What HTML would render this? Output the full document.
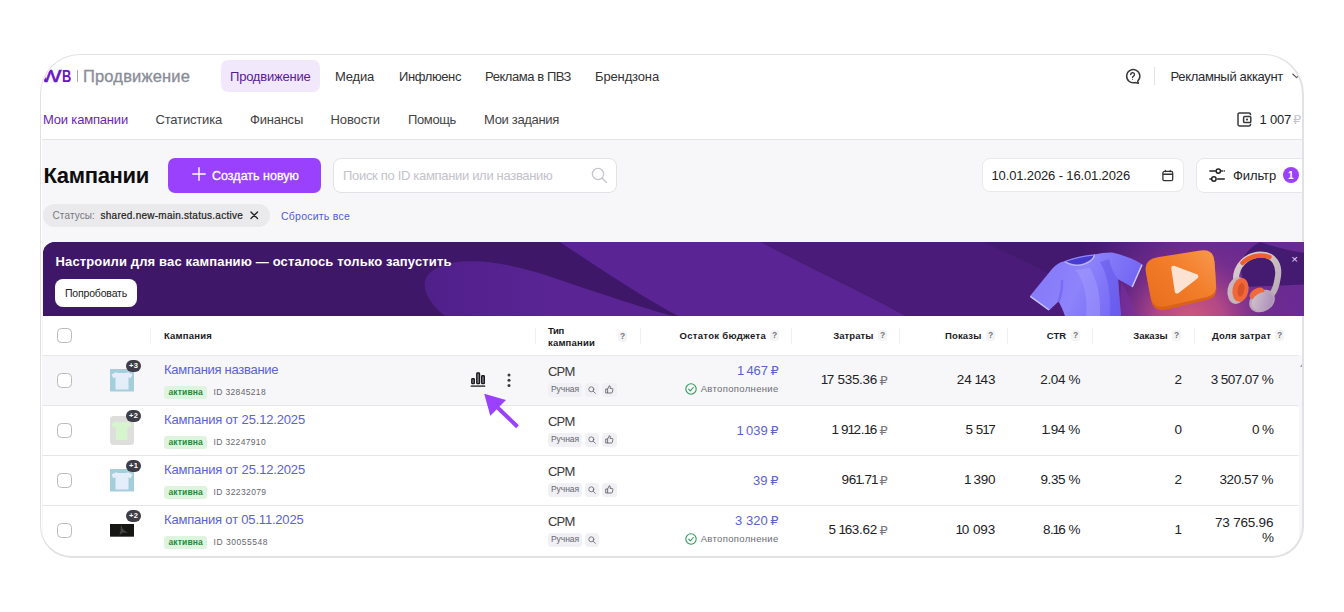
<!DOCTYPE html>
<html lang="ru"><head><meta charset="utf-8"><title>WB Продвижение — Кампании</title>
<style>
*{box-sizing:border-box;margin:0;padding:0}
html,body{width:1344px;height:612px;background:#fff;overflow:hidden}
body{font-family:"Liberation Sans","DejaVu Sans",sans-serif;position:relative;color:#222}
#clip{position:absolute;left:0;top:0;width:1344px;height:612px;clip-path:inset(55.500px 41.500px 56.500px 41.500px round 38.500px 38.500px 30px 30px);background:#fff}
#frame{position:absolute;left:40.100px;top:54.200px;width:1263.900px;height:503.400px;border:solid #e2e2e5;border-width:1.800px 2px 2.600px 1.800px;border-radius:40px 40px 32px 32px;pointer-events:none}
.a{position:absolute}
.t{position:absolute;white-space:nowrap}
svg{position:absolute;overflow:visible}
.cb{position:absolute;width:15px;height:15px;border:1.5px solid #b9b9c0;border-radius:4.5px;background:#fff}
.q{position:absolute;width:9px;height:11px;border-radius:3px;background:#f4f4f6;color:#74747c;font-size:8.500px;font-weight:700;line-height:11px;text-align:center}
.sep{position:absolute;top:328px;width:1px;height:16px;background:#f0f0f3}
.rowline{position:absolute;left:42px;width:1256px;height:1px;background:#e6e6ea}
.st{position:absolute;left:164px;width:43px;height:12.500px;border-radius:3px;background:#dff4df}
.chip{position:absolute;height:14px;border-radius:3.500px;background:#f1f1f5}
.plus{position:absolute;width:15.200px;height:12.200px;border-radius:6.100px;background:#3e3e49;color:#fff;font-size:7.500px;font-weight:700;line-height:12.200px;text-align:center;letter-spacing:.300px}
.o{font-style:normal;margin:0 -1.200px 0 -.600px}
.lw{display:inline-block;font-weight:400;transform:scaleX(1.380);transform-origin:0 50%;-webkit-text-stroke:.450px #6b14c9}
.lb{display:inline-block;font-weight:700;transform:scaleX(.780);transform-origin:0 50%;margin-left:6px}

</style></head>
<body>
<div id="clip">
<!-- header -->
<div class="a" style="left:42px;top:55px;width:1262px;height:84px;background:#fff"></div>
<div class="a" style="left:42px;top:139px;width:1262px;height:1px;background:#e4e4e8"></div>
<div class="a" style="left:42px;top:140px;width:1262px;height:416px;background:#f7f7f9"></div>
<div class="a" style="left:76.800px;top:70px;width:1px;height:12px;background:#a9a9b0"></div>
<div class="a" style="left:221px;top:60px;width:99px;height:32px;border-radius:7px;background:#f1e8fc"></div>
<div class="a" style="left:1154px;top:67px;width:1px;height:18px;background:#e2e2e6"></div>
<!-- help icon -->
<svg style="left:1124px;top:68px" width="17" height="17" viewBox="0 0 17 17" fill="none" stroke="#3a3a3e" stroke-width="1.500" stroke-linecap="round" stroke-linejoin="round"><path d="M13.6 13.2A6.6 6.6 0 1 0 11 14.6l3.4.6z"/><path d="M6.7 6.6a1.9 1.9 0 1 1 2.7 1.7c-.6.3-.9.7-.9 1.3" stroke-width="1.400"/><circle cx="8.5" cy="11.6" r=".5" fill="#444" stroke="none"/></svg>
<!-- chevron -->
<svg style="left:1292px;top:73px" width="9" height="6" viewBox="0 0 9 6" fill="none" stroke="#555" stroke-width="1.1" stroke-linecap="round" stroke-linejoin="round"><path d="M.8 1l3.7 3.6L8.2 1"/></svg>
<!-- wallet -->
<svg style="left:1237px;top:112px" width="15" height="15" viewBox="0 0 15 15" fill="none" stroke="#3a3a3e" stroke-width="1.500" stroke-linejoin="round"><path d="M13.5 3.2V2.4c0-.8-.6-1.4-1.4-1.4H2.4C1.600 1 1 1.600 1 2.400v10.200c0 .8.600 1.400 1.400 1.400h9.700c.8 0 1.400-.6 1.400-1.400v-.8"/><rect x="6.600" y="4.400" width="7.200" height="6.200" rx="1.200"/><rect x="9" y="6.600" width="2" height="1.800" fill="#444" stroke="none"/></svg>
<!-- create button -->
<div class="a" style="left:168px;top:158px;width:153px;height:35px;border-radius:7px;background:#9a41fe"></div>
<svg style="left:191.500px;top:167.300px" width="14" height="14" viewBox="0 0 14 14" stroke="#fff" stroke-width="1.400" stroke-linecap="round"><path d="M7 .800v12.400M.800 7h12.400"/></svg>
<!-- search -->
<div class="a" style="left:333px;top:158px;width:284px;height:35px;border-radius:8px;background:#fff;border:1px solid #e2e2e6"></div>
<svg style="left:591px;top:167px" width="17" height="17" viewBox="0 0 17 17" fill="none" stroke="#c4c4ca" stroke-width="1.3" stroke-linecap="round"><circle cx="7" cy="7" r="5.600"/><path d="M11.200 11.200l4.300 4.300"/></svg>
<!-- date -->
<div class="a" style="left:982px;top:158px;width:202px;height:34px;border-radius:8px;background:#fff;border:1px solid #e9e9ec"></div>
<svg style="left:1162px;top:169.500px" width="11.600" height="11.600" viewBox="0 0 11.600 11.600" fill="none" stroke="#333" stroke-width="1.300"><rect x=".900" y="1.400" width="9.800" height="9.300" rx="1.500"/><path d="M.900 4.300h9.800" stroke-width="1.500"/><path d="M3.400.300v1.400M8.200.300v1.400" stroke-linecap="round" stroke-width="1.100"/></svg>
<!-- filter -->
<div class="a" style="left:1196px;top:158px;width:130px;height:35px;border-radius:8px;background:#fff;border:1px solid #e6e6ea"></div>
<svg style="left:1209px;top:166.500px" width="16" height="16" viewBox="0 0 16 16" fill="none" stroke="#222" stroke-width="1.500" stroke-linecap="round"><path d="M.900 4.100h5.300M12.700 4.100h.700M15.200 4.100h.100M.900 12h.700M8.600 12h6.700"/><circle cx="9.300" cy="4.100" r="2.200"/><circle cx="4.900" cy="12" r="2.200"/></svg>
<div class="a" style="left:1282.500px;top:167.200px;width:16.200px;height:16.200px;border-radius:50%;background:#9a41fe"></div>
<!-- filter chip -->
<div class="a" style="left:43px;top:204px;width:227px;height:23px;border-radius:12px;background:#eaeaed"></div>
<svg style="left:250.300px;top:211.300px" width="8.500" height="8.500" viewBox="0 0 9 9" stroke="#222" stroke-width="1.350" stroke-linecap="round"><path d="M1 1l7 7M8 1l-7 7"/></svg>
<!-- table header -->
<div class="a" style="left:43px;top:316px;width:1262px;height:39px;background:#fff"></div>
<div class="rowline" style="top:355px;background:#e9e9ed"></div>
<div class="cb" style="left:57px;top:328px"></div>
<div class="sep" style="left:150px"></div>
<div class="sep" style="left:535px"></div>
<div class="sep" style="left:640px"></div>
<div class="sep" style="left:791px"></div>
<div class="sep" style="left:899px"></div>
<div class="sep" style="left:1007px"></div>
<div class="sep" style="left:1092px"></div>
<div class="sep" style="left:1194px"></div>
<div class="q" style="left:618px;top:331px">?</div>
<div class="q" style="left:770px;top:330px">?</div>
<div class="q" style="left:878px;top:330px">?</div>
<div class="q" style="left:986px;top:330px">?</div>
<div class="q" style="left:1071px;top:330px">?</div>
<div class="q" style="left:1172px;top:330px">?</div>
<div class="q" style="left:1275px;top:330px">?</div>
<!-- rows -->
<div class="a" style="left:43px;top:356px;width:1259px;height:49px;background:#f7f7f9"></div>
<div class="a" style="left:43px;top:406px;width:1256px;height:49px;background:#fff"></div>
<div class="a" style="left:43px;top:456px;width:1256px;height:49px;background:#fff"></div>
<div class="a" style="left:43px;top:506px;width:1256px;height:50px;background:#fff"></div>
<div class="rowline" style="top:405px"></div>
<div class="rowline" style="top:455px"></div>
<div class="rowline" style="top:505px"></div>
<!-- scrollbar -->
<svg style="left:1299.500px;top:361px" width="4" height="6" viewBox="0 0 4 6"><path d="M0 6L4 0v6z" fill="#a0a0a6"/></svg>
<div class="cb" style="left:57px;top:372.5px"></div>
<svg style="left:110px;top:369.3px" width="24" height="22.5" viewBox="0 0 24 22.5"><rect width="24" height="22.5" fill="#a6cddb"/><path d="M1.500 5.500l4.500-2.300c2.500 1.200 9.500 1.200 12 0l4.500 2.300-1.800 3.800-2.200-1v12.200H5.500V8.300l-2.200 1z" fill="#e3eefa"/></svg>
<div class="plus" style="left:126px;top:359.6px">+3</div>
<div class="st" style="top:386px"></div>
<div class="chip" style="left:548px;top:382.5px;width:34.300px"></div>
<div class="chip" style="left:585px;top:382.5px;width:14.300px"></div>
<svg style="left:588px;top:385.5px" width="8" height="8" viewBox="0 0 8 8" fill="none" stroke="#606066" stroke-width=".800" stroke-linecap="round"><circle cx="3.300" cy="3.300" r="2.500"/><path d="M5.200 5.200l2.200 2.200"/></svg>
<div class="chip" style="left:602px;top:382.5px;width:15px"></div>
<svg style="left:605px;top:385px" width="9" height="9" viewBox="0 0 9 9" fill="none" stroke="#55555c" stroke-width=".800" stroke-linejoin="round"><path d="M2.600 4v4M.700 4h1.900l1.700-3.300c.7 0 1.100.5 1 1.200l-.3 1.500h2c.6 0 1 .5.900 1.100l-.5 2.600c-.1.500-.5.900-1 .9H.700z"/></svg>
<svg style="left:684.500px;top:383px" width="12" height="12" viewBox="0 0 12 12" fill="none" stroke="#2e9c57" stroke-width="1.100" stroke-linecap="round" stroke-linejoin="round"><circle cx="6" cy="6" r="5.200"/><path d="M3.700 6.200l1.600 1.600 3-3.300"/></svg>
<div class="cb" style="left:57px;top:422.5px"></div>
<svg style="left:110px;top:416px" width="24" height="29" viewBox="0 0 24 29"><rect width="24" height="29" rx="3.500" fill="#dededd"/><path d="M1.500 8l4.500-2.500c2.500 1.200 8.500 1.200 11 0l4.500 2.500-1.500 4-2.500-1v13H6V11l-2.500 1z" fill="#d6f5cf"/></svg>
<div class="plus" style="left:126px;top:409.6px">+2</div>
<div class="st" style="top:436px"></div>
<div class="chip" style="left:548px;top:432.5px;width:34.300px"></div>
<div class="chip" style="left:585px;top:432.5px;width:14.300px"></div>
<svg style="left:588px;top:435.5px" width="8" height="8" viewBox="0 0 8 8" fill="none" stroke="#606066" stroke-width=".800" stroke-linecap="round"><circle cx="3.300" cy="3.300" r="2.500"/><path d="M5.200 5.200l2.200 2.200"/></svg>
<div class="chip" style="left:602px;top:432.5px;width:15px"></div>
<svg style="left:605px;top:435px" width="9" height="9" viewBox="0 0 9 9" fill="none" stroke="#55555c" stroke-width=".800" stroke-linejoin="round"><path d="M2.600 4v4M.700 4h1.900l1.700-3.300c.7 0 1.100.5 1 1.200l-.3 1.500h2c.6 0 1 .5.900 1.100l-.5 2.600c-.1.500-.5.900-1 .9H.700z"/></svg>
<div class="cb" style="left:57px;top:472.5px"></div>
<svg style="left:110px;top:469.3px" width="24" height="22.5" viewBox="0 0 24 22.5"><rect width="24" height="22.5" fill="#a6cddb"/><path d="M1.500 5.500l4.500-2.300c2.500 1.200 9.500 1.200 12 0l4.500 2.300-1.800 3.800-2.200-1v12.200H5.500V8.300l-2.200 1z" fill="#e3eefa"/></svg>
<div class="plus" style="left:126px;top:459.6px">+1</div>
<div class="st" style="top:486px"></div>
<div class="chip" style="left:548px;top:482.5px;width:34.300px"></div>
<div class="chip" style="left:585px;top:482.5px;width:14.300px"></div>
<svg style="left:588px;top:485.5px" width="8" height="8" viewBox="0 0 8 8" fill="none" stroke="#606066" stroke-width=".800" stroke-linecap="round"><circle cx="3.300" cy="3.300" r="2.500"/><path d="M5.200 5.200l2.200 2.200"/></svg>
<div class="chip" style="left:602px;top:482.5px;width:15px"></div>
<svg style="left:605px;top:485px" width="9" height="9" viewBox="0 0 9 9" fill="none" stroke="#55555c" stroke-width=".800" stroke-linejoin="round"><path d="M2.600 4v4M.700 4h1.900l1.700-3.300c.7 0 1.100.5 1 1.200l-.3 1.500h2c.6 0 1 .5.900 1.100l-.5 2.600c-.1.500-.5.900-1 .9H.700z"/></svg>
<div class="cb" style="left:57px;top:522.5px"></div>
<svg style="left:110px;top:524.2px" width="24" height="12.700" viewBox="0 0 24 12.700"><rect width="24" height="12.700" fill="#161614"/><path d="M11 .500l1.500 4 2.500 2.500 3 2-5-.500-3.500 2.500 1-4z" fill="#6a6a62" opacity=".55"/></svg>
<div class="plus" style="left:126px;top:509.6px">+2</div>
<div class="st" style="top:536px"></div>
<div class="chip" style="left:548px;top:532.5px;width:34.300px"></div>
<div class="chip" style="left:585px;top:532.5px;width:14.300px"></div>
<svg style="left:588px;top:535.5px" width="8" height="8" viewBox="0 0 8 8" fill="none" stroke="#606066" stroke-width=".800" stroke-linecap="round"><circle cx="3.300" cy="3.300" r="2.500"/><path d="M5.200 5.200l2.200 2.200"/></svg>
<svg style="left:684.500px;top:533px" width="12" height="12" viewBox="0 0 12 12" fill="none" stroke="#2e9c57" stroke-width="1.100" stroke-linecap="round" stroke-linejoin="round"><circle cx="6" cy="6" r="5.200"/><path d="M3.700 6.200l1.600 1.600 3-3.300"/></svg>
<svg style="left:470px;top:371px" width="16" height="16" viewBox="470 371 16 16" fill="#8a8a90" stroke="#1a1a1e" stroke-width="1.400"><rect x="471.800" y="378.800" width="2.500" height="4.800" rx=".700"/><rect x="476.800" y="373" width="2.700" height="10.600" rx=".700"/><rect x="481.700" y="375.700" width="2.600" height="7.900" rx=".700"/><path d="M470.700 386.100h14.500" stroke-width="1.300" fill="none"/></svg>
<svg style="left:507px;top:373.400px" width="4" height="15" viewBox="0 0 4 15" fill="#3a3a3e"><circle cx="2" cy="2" r="1.500"/><circle cx="2" cy="7.200" r="1.500"/><circle cx="2" cy="12.500" r="1.500"/></svg>
<svg style="left:0;top:0" width="1344" height="612" viewBox="0 0 1344 612"><path d="M497 407L517.500 426.700" stroke="#9a41fe" stroke-width="4" fill="none"/><path d="M484.200 393.800L506 400L490.300 415.800z" fill="#9a41fe"/></svg>
<span class="t" style="left:40px;top:65.80px;font-size:16.5px;line-height:21px;color:#6b14c9;"><b class="lw">W</b><b class="lb">B</b></span>
<span class="t" style="left:83px;top:66.00px;font-size:16.5px;line-height:21px;color:#8b8d99;letter-spacing:0.165px;-webkit-text-stroke:.350px #8b8d99;">Продвижение</span>
<span class="t" style="left:230px;top:67.60px;font-size:13px;line-height:17px;color:#5a189a;letter-spacing:-0.216px;">Продвижение</span>
<span class="t" style="left:335px;top:67.60px;font-size:13px;line-height:17px;color:#333;letter-spacing:-0.200px;">Медиа</span>
<span class="t" style="left:399px;top:67.60px;font-size:13px;line-height:17px;color:#333;letter-spacing:-0.398px;">Инфлюенс</span>
<span class="t" style="left:485px;top:67.60px;font-size:13px;line-height:17px;color:#333;letter-spacing:-0.440px;">Реклама в ПВЗ</span>
<span class="t" style="left:595px;top:67.60px;font-size:13px;line-height:17px;color:#333;letter-spacing:-0.135px;">Брендзона</span>
<span class="t" style="left:1170.5px;top:67.60px;font-size:13px;line-height:17px;color:#2a2a2e;letter-spacing:-0.319px;">Рекламный аккаунт</span>
<span class="t" style="left:43px;top:111.20px;font-size:13px;line-height:17px;color:#6a1fb8;letter-spacing:-0.184px;">Мои кампании</span>
<span class="t" style="left:155.5px;top:111.20px;font-size:13px;line-height:17px;color:#444;letter-spacing:-0.178px;">Статистика</span>
<span class="t" style="left:250px;top:111.20px;font-size:13px;line-height:17px;color:#444;letter-spacing:-0.225px;">Финансы</span>
<span class="t" style="left:330.5px;top:111.20px;font-size:13px;line-height:17px;color:#444;letter-spacing:-0.118px;">Новости</span>
<span class="t" style="left:408px;top:111.20px;font-size:13px;line-height:17px;color:#444;letter-spacing:-0.370px;">Помощь</span>
<span class="t" style="left:484px;top:111.20px;font-size:13px;line-height:17px;color:#444;letter-spacing:-0.325px;">Мои задания</span>
<span class="t" style="left:1259.5px;top:111.20px;font-size:13px;line-height:17px;color:#222;letter-spacing:-0.209px;">1 007</span>
<span class="t" style="left:1293px;top:111.20px;font-size:13px;line-height:17px;color:#c4c4ca;">₽</span>
<span class="t" style="left:43.5px;top:161.00px;font-size:22px;line-height:29px;color:#0d0d10;font-weight:700;letter-spacing:-0.322px;">Кампании</span>
<span class="t" style="left:212px;top:167.50px;font-size:12.5px;line-height:16px;color:#fff;letter-spacing:0.013px;-webkit-text-stroke:.3px #fff;">Создать новую</span>
<span class="t" style="left:343px;top:167.00px;font-size:13px;line-height:17px;color:#c3c3c9;letter-spacing:-0.318px;">Поиск по ID кампании или названию</span>
<span class="t" style="left:991.5px;top:167.00px;font-size:13px;line-height:17px;color:#222;letter-spacing:-0.139px;">10.01.2026 - 16.01.2026</span>
<span class="t" style="left:1233px;top:167.00px;font-size:13px;line-height:17px;color:#222;letter-spacing:-0.112px;">Фильтр</span>
<span class="t" style="left:1288px;top:168.90px;font-size:10px;line-height:13px;color:#fff;font-weight:700;">1</span>
<span class="t" style="left:52.5px;top:209.00px;font-size:10px;line-height:13px;color:#77777f;letter-spacing:0.115px;">Статусы:</span>
<span class="t" style="left:100.5px;top:209.00px;font-size:10px;line-height:13px;color:#1c1c20;letter-spacing:0.256px;-webkit-text-stroke:.2px #1c1c20;">shared.new-main.status.active</span>
<span class="t" style="left:281px;top:208.50px;font-size:10.5px;line-height:14px;color:#4f5bd5;letter-spacing:0.238px;">Сбросить все</span>
<span class="t" style="left:164px;top:330.00px;font-size:9.5px;line-height:12px;color:#1a1a1e;font-weight:700;letter-spacing:0.203px;">Кампания</span>
<span class="t" style="left:548px;top:324.70px;font-size:9.5px;line-height:12px;color:#1a1a1e;font-weight:700;letter-spacing:-0.344px;">Тип</span>
<span class="t" style="left:548px;top:337.30px;font-size:9.5px;line-height:12px;color:#1a1a1e;font-weight:700;letter-spacing:0.186px;">кампании</span>
<span class="t" style="left:679.5px;top:330.00px;font-size:9.5px;line-height:12px;color:#1a1a1e;font-weight:700;letter-spacing:0.304px;">Остаток бюджета</span>
<span class="t" style="left:833.3px;top:330.00px;font-size:9.5px;line-height:12px;color:#1a1a1e;font-weight:700;letter-spacing:0.036px;">Затраты</span>
<span class="t" style="left:945px;top:330.00px;font-size:9.5px;line-height:12px;color:#1a1a1e;font-weight:700;letter-spacing:0.129px;">Показы</span>
<span class="t" style="left:1046.7px;top:330.00px;font-size:9.5px;line-height:12px;color:#1a1a1e;font-weight:700;letter-spacing:-0.077px;">CTR</span>
<span class="t" style="left:1133.3px;top:330.00px;font-size:9.5px;line-height:12px;color:#1a1a1e;font-weight:700;letter-spacing:0.028px;">Заказы</span>
<span class="t" style="left:1212px;top:330.00px;font-size:9.5px;line-height:12px;color:#1a1a1e;font-weight:700;letter-spacing:0.204px;">Доля затрат</span>
<span class="t" style="left:168.5px;top:386.70px;font-size:8.5px;line-height:11px;color:#1f8a3a;font-weight:700;letter-spacing:0.147px;">активна</span>
<span class="t" style="left:213.5px;top:386.70px;font-size:8.5px;line-height:11px;color:#66666e;letter-spacing:0.347px;">ID 32845218</span>
<span class="t" style="left:164px;top:361.20px;font-size:13px;line-height:17px;color:#5a62d4;letter-spacing:-0.276px;">Кампания название</span>
<span class="t" style="left:548px;top:362.80px;font-size:13px;line-height:17px;color:#3a3a40;letter-spacing:-0.797px;">CPM</span>
<span class="t" style="left:551px;top:384.00px;font-size:8.5px;line-height:11px;color:#66666c;letter-spacing:-0.062px;">Ручная</span>
<span class="t" style="left:737.5px;top:362.20px;font-size:13px;line-height:17px;color:#5a62d4;letter-spacing:-0.079px;"><i class="o">1</i> 467 <span style="letter-spacing:0;margin-left:-1px">₽</span></span>
<span class="t" style="left:700.7px;top:383.00px;font-size:9.5px;line-height:12px;color:#6c6c74;letter-spacing:0.331px;">Автопополнение</span>
<span class="t" style="left:821.4px;top:371.40px;font-size:13.5px;line-height:18px;color:#222226;letter-spacing:-0.300px;"><i class="o">1</i>7 535.36</span>
<span class="t" style="left:879.5px;top:371.90px;font-size:13px;line-height:17px;color:#77777f;">₽</span>
<span class="t" style="left:956.8px;top:371.40px;font-size:13.5px;line-height:18px;color:#222226;letter-spacing:-0.174px;">24 <i class="o">1</i>43</span>
<span class="t" style="left:1040.3px;top:371.40px;font-size:13.5px;line-height:18px;color:#222226;letter-spacing:-0.389px;">2.04 %</span>
<span class="t" style="left:1174.5px;top:371.40px;font-size:13.5px;line-height:18px;color:#222226;letter-spacing:-0.416px;">2</span>
<span class="t" style="left:1210.7px;top:371.40px;font-size:13.5px;line-height:18px;color:#222226;letter-spacing:-0.581px;">3 507.07 %</span>
<span class="t" style="left:168.5px;top:436.70px;font-size:8.5px;line-height:11px;color:#1f8a3a;font-weight:700;letter-spacing:0.147px;">активна</span>
<span class="t" style="left:213.5px;top:436.70px;font-size:8.5px;line-height:11px;color:#66666e;letter-spacing:0.347px;">ID 32247910</span>
<span class="t" style="left:164px;top:411.20px;font-size:13px;line-height:17px;color:#5a62d4;letter-spacing:-0.168px;">Кампания от 25.12.2025</span>
<span class="t" style="left:548px;top:412.80px;font-size:13px;line-height:17px;color:#3a3a40;letter-spacing:-0.797px;">CPM</span>
<span class="t" style="left:551px;top:434.00px;font-size:8.5px;line-height:11px;color:#66666c;letter-spacing:-0.062px;">Ручная</span>
<span class="t" style="left:737px;top:421.50px;font-size:13px;line-height:17px;color:#5a62d4;letter-spacing:-0.008px;"><i class="o">1</i> 039 <span style="letter-spacing:0;margin-left:-1px">₽</span></span>
<span class="t" style="left:832px;top:421.40px;font-size:13.5px;line-height:18px;color:#222226;letter-spacing:-0.281px;"><i class="o">1</i> 9<i class="o">1</i>2.<i class="o">1</i>6</span>
<span class="t" style="left:879.5px;top:421.90px;font-size:13px;line-height:17px;color:#77777f;">₽</span>
<span class="t" style="left:965.5px;top:421.40px;font-size:13.5px;line-height:18px;color:#222226;letter-spacing:-0.446px;">5 5<i class="o">1</i>7</span>
<span class="t" style="left:1042px;top:421.40px;font-size:13.5px;line-height:18px;color:#222226;letter-spacing:-0.378px;"><i class="o">1</i>.94 %</span>
<span class="t" style="left:1174.5px;top:421.40px;font-size:13.5px;line-height:18px;color:#222226;letter-spacing:-0.416px;">0</span>
<span class="t" style="left:1252px;top:421.40px;font-size:13.5px;line-height:18px;color:#222226;letter-spacing:-0.689px;">0 %</span>
<span class="t" style="left:168.5px;top:486.70px;font-size:8.5px;line-height:11px;color:#1f8a3a;font-weight:700;letter-spacing:0.147px;">активна</span>
<span class="t" style="left:213.5px;top:486.70px;font-size:8.5px;line-height:11px;color:#66666e;letter-spacing:0.392px;">ID 32232079</span>
<span class="t" style="left:164px;top:461.20px;font-size:13px;line-height:17px;color:#5a62d4;letter-spacing:-0.168px;">Кампания от 25.12.2025</span>
<span class="t" style="left:548px;top:462.80px;font-size:13px;line-height:17px;color:#3a3a40;letter-spacing:-0.797px;">CPM</span>
<span class="t" style="left:551px;top:484.00px;font-size:8.5px;line-height:11px;color:#66666c;letter-spacing:-0.062px;">Ручная</span>
<span class="t" style="left:753px;top:471.50px;font-size:13px;line-height:17px;color:#5a62d4;letter-spacing:0.060px;">39 <span style="letter-spacing:0;margin-left:-1px">₽</span></span>
<span class="t" style="left:841.5px;top:471.40px;font-size:13.5px;line-height:18px;color:#222226;letter-spacing:-0.378px;">96<i class="o">1</i>.7<i class="o">1</i></span>
<span class="t" style="left:879.5px;top:471.90px;font-size:13px;line-height:17px;color:#77777f;">₽</span>
<span class="t" style="left:964.5px;top:471.40px;font-size:13.5px;line-height:18px;color:#222226;letter-spacing:-0.243px;"><i class="o">1</i> 390</span>
<span class="t" style="left:1040.5px;top:471.40px;font-size:13.5px;line-height:18px;color:#222226;letter-spacing:-0.422px;">9.35 %</span>
<span class="t" style="left:1174.5px;top:471.40px;font-size:13.5px;line-height:18px;color:#222226;letter-spacing:-0.416px;">2</span>
<span class="t" style="left:1219.5px;top:471.40px;font-size:13.5px;line-height:18px;color:#222226;letter-spacing:-0.418px;">320.57 %</span>
<span class="t" style="left:168.5px;top:536.70px;font-size:8.5px;line-height:11px;color:#1f8a3a;font-weight:700;letter-spacing:0.147px;">активна</span>
<span class="t" style="left:213.5px;top:536.70px;font-size:8.5px;line-height:11px;color:#66666e;letter-spacing:0.528px;">ID 30055548</span>
<span class="t" style="left:164px;top:511.20px;font-size:13px;line-height:17px;color:#5a62d4;letter-spacing:-0.192px;">Кампания от 05.11.2025</span>
<span class="t" style="left:548px;top:512.80px;font-size:13px;line-height:17px;color:#3a3a40;letter-spacing:-0.797px;">CPM</span>
<span class="t" style="left:551px;top:534.00px;font-size:8.5px;line-height:11px;color:#66666c;letter-spacing:-0.062px;">Ручная</span>
<span class="t" style="left:735px;top:512.20px;font-size:13px;line-height:17px;color:#5a62d4;letter-spacing:0.023px;">3 320 <span style="letter-spacing:0;margin-left:-1px">₽</span></span>
<span class="t" style="left:700.7px;top:533.00px;font-size:9.5px;line-height:12px;color:#6c6c74;letter-spacing:0.331px;">Автопополнение</span>
<span class="t" style="left:828.5px;top:521.40px;font-size:13.5px;line-height:18px;color:#222226;letter-spacing:-0.287px;">5 <i class="o">1</i>63.62</span>
<span class="t" style="left:879.5px;top:521.90px;font-size:13px;line-height:17px;color:#77777f;">₽</span>
<span class="t" style="left:956px;top:521.40px;font-size:13.5px;line-height:18px;color:#222226;letter-spacing:-0.039px;"><i class="o">1</i>0 093</span>
<span class="t" style="left:1043px;top:521.40px;font-size:13.5px;line-height:18px;color:#222226;letter-spacing:-0.544px;">8.<i class="o">1</i>6 %</span>
<span class="t" style="left:1174.5px;top:521.40px;font-size:13.5px;line-height:18px;color:#222226;letter-spacing:-0.416px;">1</span>
<span class="t" style="left:1215px;top:513.80px;font-size:13.5px;line-height:18px;color:#222226;letter-spacing:-0.207px;">73 765.96</span>
<span class="t" style="left:1262px;top:529.30px;font-size:13.5px;line-height:18px;color:#222226;letter-spacing:-0.816px;">%</span>
</div>
<div id="frame"></div>
<!-- banner -->
<div class="a" style="left:43px;top:242px;width:1261px;height:74px;border-radius:12px 0 0 0;overflow:hidden;background:#3f1768">
<svg style="left:0;top:0" width="1261" height="74" viewBox="43 242 1261 74">
<defs>
<radialGradient id="glow" cx="1190" cy="324" r="118" gradientUnits="userSpaceOnUse"><stop offset="0" stop-color="#d45c7c"/><stop offset=".3" stop-color="#b84a86" stop-opacity=".92"/><stop offset=".6" stop-color="#86348c" stop-opacity=".45"/><stop offset="1" stop-color="#6a2a94" stop-opacity="0"/></radialGradient>
<linearGradient id="rfade" x1="1080" y1="0" x2="1304" y2="0" gradientUnits="userSpaceOnUse"><stop offset="0" stop-color="#6a2a94" stop-opacity="0"/><stop offset=".5" stop-color="#6a2a94" stop-opacity=".8"/><stop offset="1" stop-color="#6a2a94"/></linearGradient>
<linearGradient id="shirt" x1="1040" y1="255" x2="1135" y2="300" gradientUnits="userSpaceOnUse"><stop offset="0" stop-color="#8579f8"/><stop offset=".45" stop-color="#8d83fb"/><stop offset="1" stop-color="#6f62f2"/></linearGradient>
<linearGradient id="play" x1="1210" y1="250" x2="1155" y2="308" gradientUnits="userSpaceOnUse"><stop offset="0" stop-color="#f8964a"/><stop offset=".45" stop-color="#f27d2a"/><stop offset="1" stop-color="#e96f1e"/></linearGradient>
<linearGradient id="metal" x1="1230" y1="255" x2="1280" y2="310" gradientUnits="userSpaceOnUse"><stop offset="0" stop-color="#ddd3d3"/><stop offset="1" stop-color="#b3a3ae"/></linearGradient>
<linearGradient id="cup" x1="1250" y1="290" x2="1272" y2="312" gradientUnits="userSpaceOnUse"><stop offset="0" stop-color="#d9cdd0"/><stop offset="1" stop-color="#a688b8"/></linearGradient>
<linearGradient id="el1" x1="425" y1="0" x2="560" y2="0" gradientUnits="userSpaceOnUse"><stop offset="0" stop-color="#50208a"/><stop offset="1" stop-color="#5a2494"/></linearGradient>
</defs>
<rect x="43" y="242" width="1262" height="75" fill="#3f1768"/>
<!-- light ellipse 1 -->
<path d="M446 317C425 300 418 282 432 271C452 256 500 258 560 280C610 297 650 310 676 317Z" fill="url(#el1)"/>
<!-- light region 2 -->
<path d="M560 242C590 262 640 296 680 317H908C870 296 810 268 761 242Z" fill="#5a2494"/>
<!-- medium -->
<path d="M761 242C810 268 870 296 908 317H1305V242Z" fill="#4a1b79"/>
<!-- dark top right of medium -->
<path d="M983 242C1010 254 1040 268 1080 290L1120 317H1305V242Z" fill="#43196f"/>
<rect x="1060" y="242" width="245" height="75" fill="url(#rfade)"/>
<rect x="1000" y="242" width="305" height="75" fill="url(#glow)"/>
<!-- dark band top-right -->
<path d="M1260 242C1274 247 1290 251 1305 253V284.500L1244 287L1240 264C1244 254 1252 246 1260 242Z" fill="#451a71"/>
<!-- t-shirt -->
<g>
<path d="M1121 282C1126 290 1132 300 1136 317H1120Z" fill="#7a2fa8" opacity=".55"/>
<path d="M1064.700 261.300C1060 262 1056 264.500 1052 269L1030 296L1049.200 310.300L1058.500 301.600C1061 306 1063.500 311 1065.300 317H1121.200C1120 305 1119 292 1118.100 279.300L1132.400 287.300L1142.400 264.400C1133 258.500 1122 254.500 1112 252.600C1106 252.500 1100 253.500 1094.500 254.400C1094 262 1078 270 1064.700 261.300Z" fill="url(#shirt)"/>
<path d="M1075 270C1084 280 1088 298 1086 317H1100C1101 296 1097 280 1090 268Z" fill="#a79fff" opacity=".45"/>
<path d="M1100 262C1108 275 1111 295 1110 317H1121.200L1118.100 279.300C1114 274 1111 268 1109 259Z" fill="#5e4fe6" opacity=".45"/>
<path d="M1058.500 301.600C1061 295 1062.500 288 1062 280" stroke="#6a5cf0" stroke-width="2.500" fill="none" opacity=".55"/>
<path d="M1064.700 261.300C1074 257.500 1087 254.800 1094.500 254.400C1094 262 1078 270 1064.700 261.300Z" fill="#463cd2"/>
<path d="M1064.700 261.300C1078 270 1094 262 1094.500 254.400" fill="none" stroke="#b9b2ff" stroke-width="1.600"/><path d="M1066 261C1075 258 1086 255.800 1093.500 255.200" fill="none" stroke="#8f86fb" stroke-width="1.300"/>
<path d="M1030.300 296.300L1049 310" stroke="#cbc5ff" stroke-width="1.500" fill="none"/>
<path d="M1142 264.800L1132.200 287" stroke="#cbc5ff" stroke-width="1.500" fill="none"/>
</g>
<!-- play button -->
<g>
<path d="M1158 259.800L1200.500 253.400Q1214 251.400 1214.800 264.800L1216.300 287.800Q1217 297.800 1207.800 299.700L1167 309.600Q1153 312.600 1151 299.800L1146.300 274.300Q1144 262.300 1158 259.800Z" fill="#d9611a"/>
<path d="M1157.500 257.300L1200.300 250.400Q1213.800 248.400 1214.500 261.800L1216 284.800Q1216.800 294.800 1207.600 296.700L1166.500 306.300Q1152.500 309.300 1150.500 296.600L1145.800 271.800Q1143.500 259.800 1157.500 257.300Z" fill="url(#play)"/>
<path d="M1171.300 268.500c-.2-2.200 1.600-3.300 3.500-2.500l22 8.300c2 .8 2.200 3 .5 4.200l-18.700 14.500c-1.700 1.300-3.700.4-3.900-1.700z" fill="#fbe2d3"/>
</g>
<!-- headphones -->
<g>
<path d="M1236 281C1235 266 1247 254.500 1261 254.500C1274 254.500 1280.500 265 1277.500 279C1276.500 286 1275 290 1272 294" fill="none" stroke="url(#metal)" stroke-width="6" stroke-linecap="round"/>
<path d="M1242.500 263C1249 256.500 1260 253.500 1269.500 257" fill="none" stroke="#ee5f2e" stroke-width="4.500" stroke-linecap="round"/>
<ellipse cx="1262" cy="301" rx="13.500" ry="10.500" transform="rotate(-30 1262 301)" fill="#b9a7b4"/>
<ellipse cx="1257" cy="293.500" rx="8" ry="5" transform="rotate(-30 1257 293.500)" fill="#ef6b3c"/>
<ellipse cx="1262.500" cy="301.500" rx="11.500" ry="8.800" transform="rotate(-30 1262.500 301.500)" fill="url(#cup)"/>
<ellipse cx="1237" cy="290.500" rx="9.500" ry="13.500" transform="rotate(10 1237 290.500)" fill="#c5b7bc"/>
<ellipse cx="1240.500" cy="289.800" rx="8" ry="12" transform="rotate(10 1240.500 289.800)" fill="#f0683a"/>
<ellipse cx="1241" cy="289.800" rx="3.300" ry="7" transform="rotate(10 1241 289.800)" fill="#d9532a"/>
</g>
</svg>

</div>
<div class="a" style="left:55px;top:279px;width:82px;height:28px;border-radius:8px;background:#fff"></div>
<span class="t" style="left:55.5px;top:253.00px;font-size:13px;line-height:17px;color:#fff;font-weight:700;letter-spacing:0.137px;">Настроили для вас кампанию — осталось только запустить</span>
<span class="t" style="left:65px;top:286.00px;font-size:10.5px;line-height:14px;color:#222;letter-spacing:-0.179px;">Попробовать</span>
<span class="t" style="left:1291.2px;top:251.80px;font-size:11.5px;line-height:15px;color:#ead9f8;">×</span>


</body></html>
